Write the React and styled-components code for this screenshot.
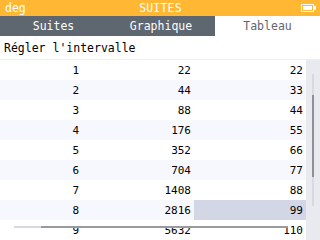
import React from "react";
import styled, { createGlobalStyle } from "styled-components";

const GlobalStyle = createGlobalStyle`
  html, body { margin: 0; padding: 0; overflow: hidden; background: #fff; }
  body { font-family: "DejaVu Sans Mono", "Liberation Mono", monospace; }
`;

const u = [22, 44, 88, 176, 352, 704, 1408, 2816, 5632];
const v = [22, 33, 44, 55, 66, 77, 88, 99, 110];

const Screen = styled.div`
  width: 320px;
  height: 240px;
  overflow: hidden;
  display: flex;
  flex-direction: column;
`;

const TitleBar = styled.div`
  height: 18px;
  background: #ffb734;
  color: #fff;
  font-size: 11.5px;
  display: grid;
  grid-template-columns: 1fr auto 1fr;
  align-items: center;
  padding: 0 4px 0 5px;
  box-sizing: border-box;
`;

const Title = styled.span`
  letter-spacing: 0.2px;
`;

const Battery = styled.svg`
  justify-self: end;
`;

const Tabs = styled.div`
  height: 22px;
  display: grid;
  grid-template-columns: 107px 108px 105px;
  background: #5e6670;
`;

const Tab = styled.div`
  display: flex;
  align-items: center;
  justify-content: center;
  font-size: 11.5px;
  color: ${(p) => (p.$active ? "#5e6670" : "#fff")};
  background: ${(p) => (p.$active ? "#fff" : "transparent")};
`;

const Setting = styled.div`
  height: 25px;
  display: flex;
  align-items: center;
  padding-left: 4px;
  font-size: 11.5px;
  color: #000;
  border-bottom: 1px solid #eeeeee;
`;

const Body = styled.div`
  flex: 1;
  display: flex;
  position: relative;
`;

const Table = styled.div`
  width: 306px;
  display: flex;
  flex-direction: column;
`;

const Row = styled.div`
  height: 20px;
  flex-shrink: 0;
  display: grid;
  grid-template-columns: 82px 112px 112px;
  background: ${(p) => (p.$alt ? "#f6f8fe" : "#fff")};
`;

const Cell = styled.div`
  display: flex;
  align-items: center;
  justify-content: flex-end;
  padding-right: 3px;
  font-size: 11px;
  color: #000;
  background: ${(p) => (p.$selected ? "#d3d6e5" : "transparent")};
`;

const VScroll = styled.div`
  width: 14px;
  background: #e9eaf0;
  display: flex;
  justify-content: center;
  padding-top: 14px;
`;

const VTrack = styled.div`
  width: 2px;
  height: 132px;
  background: #d8d9e0;
  display: flex;
  flex-direction: column;
  padding-top: 21px;
  box-sizing: border-box;
`;

const VThumb = styled.div`
  height: 82px;
  background: #8e9098;
`;

const HScroll = styled.div`
  position: absolute;
  left: 14px;
  top: 166px;
  width: 274px;
  height: 2px;
  display: flex;
  background: #d8d8dc;
`;

const HThumb = styled.div`
  margin-left: 27px;
  flex: 1;
  background: #9a9a9e;
`;

export default function App() {
  return (
    <Screen>
      <GlobalStyle />
      <TitleBar>
        <span>deg</span>
        <Title>SUITES</Title>
        <Battery width="15" height="8" viewBox="0 0 15 8">
          <rect x="0.5" y="0.5" width="12" height="7" fill="none" stroke="#fff" />
          <rect x="2" y="2" width="9" height="4" fill="#fff" />
          <rect x="13" y="2" width="2" height="4" fill="#fff" />
        </Battery>
      </TitleBar>
      <Tabs>
        <Tab>Suites</Tab>
        <Tab>Graphique</Tab>
        <Tab $active>Tableau</Tab>
      </Tabs>
      <Setting>Régler l'intervalle</Setting>
      <Body>
        <Table>
          {u.map((val, i) => (
            <Row key={i} $alt={i % 2 === 1}>
              <Cell>{i + 1}</Cell>
              <Cell>{val}</Cell>
              <Cell $selected={i === 7}>{v[i]}</Cell>
            </Row>
          ))}
        </Table>
        <VScroll>
          <VTrack>
            <VThumb />
          </VTrack>
        </VScroll>
        <HScroll>
          <HThumb />
        </HScroll>
      </Body>
    </Screen>
  );
}
